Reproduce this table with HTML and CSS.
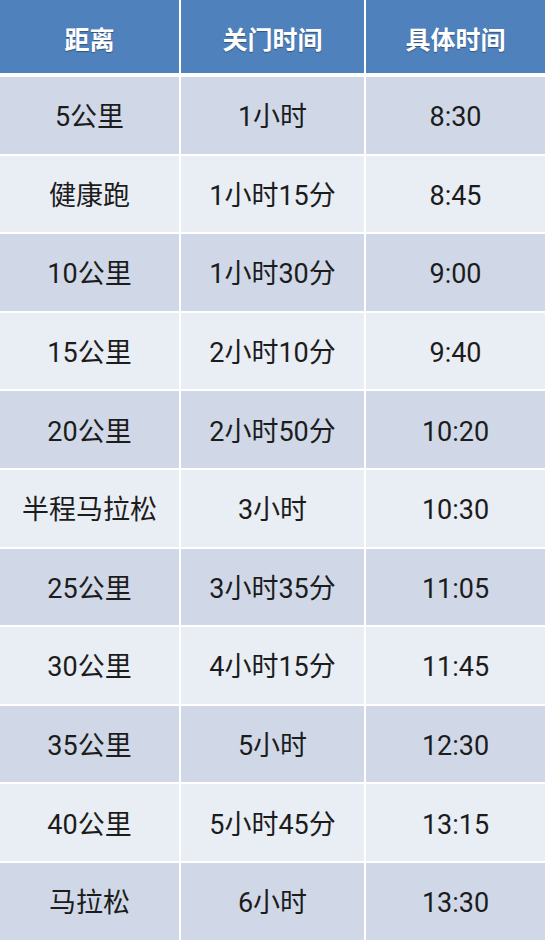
FILE: index.html
```html
<!DOCTYPE html>
<html lang="zh">
<head>
<meta charset="utf-8">
<link rel="stylesheet" href="styles.css">
</head>
<body>
<div class="table">
  <div class="row head">
    <div class="cell">距离</div>
    <div class="cell">关门时间</div>
    <div class="cell">具体时间</div>
  </div>
  <div class="row odd"><div class="cell">5公里</div><div class="cell">1小时</div><div class="cell">8:30</div></div>
  <div class="row even"><div class="cell">健康跑</div><div class="cell">1小时15分</div><div class="cell">8:45</div></div>
  <div class="row odd"><div class="cell">10公里</div><div class="cell">1小时30分</div><div class="cell">9:00</div></div>
  <div class="row even"><div class="cell">15公里</div><div class="cell">2小时10分</div><div class="cell">9:40</div></div>
  <div class="row odd"><div class="cell">20公里</div><div class="cell">2小时50分</div><div class="cell">10:20</div></div>
  <div class="row even"><div class="cell">半程马拉松</div><div class="cell">3小时</div><div class="cell">10:30</div></div>
  <div class="row odd"><div class="cell">25公里</div><div class="cell">3小时35分</div><div class="cell">11:05</div></div>
  <div class="row even"><div class="cell">30公里</div><div class="cell">4小时15分</div><div class="cell">11:45</div></div>
  <div class="row odd"><div class="cell">35公里</div><div class="cell">5小时</div><div class="cell">12:30</div></div>
  <div class="row even"><div class="cell">40公里</div><div class="cell">5小时45分</div><div class="cell">13:15</div></div>
  <div class="row odd"><div class="cell">马拉松</div><div class="cell">6小时</div><div class="cell">13:30</div></div>
</div>
</body>
</html>
```
FILE: styles.css
```css
html, body {
  margin: 0;
  padding: 0;
  background: #ffffff;
}
body {
  width: 550px;
  height: 943px;
  overflow: hidden;
  font-family: Roboto, "Noto Sans CJK SC", sans-serif;
}
.table {
  display: flex;
  flex-direction: column;
  gap: 2px;
  width: 545px;
}
.row {
  display: grid;
  grid-template-columns: 179px 183px 179px;
  column-gap: 2px;
  height: 76.6px;
}
.row.head {
  height: 73px;
  margin-bottom: 2px;
}
.cell {
  display: flex;
  align-items: center;
  justify-content: center;
  padding-top: 4px;
  box-sizing: border-box;
  font-size: 27px;
  line-height: 30px;
  color: #1c1c1c;
  font-family: Roboto, "Noto Sans CJK SC", sans-serif;
}
.head .cell {
  padding-top: 2px;
  background: #4f81bd;
  color: #ffffff;
  font-weight: bold;
  font-size: 25px;
  font-family: "Noto Sans CJK SC", sans-serif;
  text-shadow: 0 1px 1px rgba(0, 0, 0, 0.35);
}
.odd .cell {
  background: #d0d8e8;
}
.even .cell {
  background: #e9edf4;
}
```
